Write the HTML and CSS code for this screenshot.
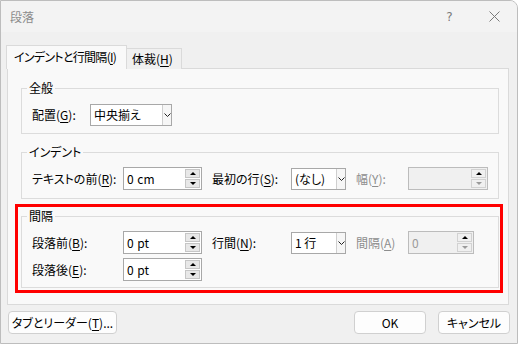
FILE: index.html
```html
<!DOCTYPE html>
<html lang="ja">
<head>
  <meta charset="UTF-8">
  <title>段落</title>
  <link rel="stylesheet" href="styles.css">
</head>
<body>
<div class="window">
  <div class="titlebar">
    <span class="title">段落</span>
    <span class="caption-btn help">?</span>
    <span class="caption-btn close">
      <svg width="11" height="11" viewBox="0 0 11 11"><path d="M0.5 0.5 L10.5 10.5 M10.5 0.5 L0.5 10.5" stroke="#7a7a7a" stroke-width="1" fill="none"/></svg>
    </span>
  </div>

  <div class="tabs">
    <div class="tab active">インデントと行間隔(<u>I</u>)</div>
    <div class="tab">体裁(<u>H</u>)</div>
  </div>

  <div class="panel">
    <!-- 全般 -->
    <fieldset class="group">
      <legend>全般</legend>
      <div class="row first">
        <span class="lbl lbl-align">配置(<u>G</u>):</span>
        <div class="select sel-align">
          <span class="val">中央揃え</span>
          <span class="drop"><svg width="7" height="4" viewBox="0 0 7 4"><polyline points="0.5,0.5 3.5,3.5 6.5,0.5" fill="none" stroke="#222" stroke-width="1"/></svg></span>
        </div>
      </div>
    </fieldset>

    <!-- インデント -->
    <fieldset class="group indent">
      <legend>インデント</legend>
      <div class="row first">
        <span class="lbl lbl-1">テキストの前(<u>R</u>):</span>
        <div class="spin">
          <span class="val">0 cm</span>
          <span class="arrows"><span class="up"></span><span class="down"></span></span>
        </div>
        <span class="lbl lbl-2">最初の行(<u>S</u>):</span>
        <div class="select sel-small">
          <span class="val">(なし)</span>
          <span class="drop"><svg width="7" height="4" viewBox="0 0 7 4"><polyline points="0.5,0.5 3.5,3.5 6.5,0.5" fill="none" stroke="#222" stroke-width="1"/></svg></span>
        </div>
        <span class="lbl lbl-3 disabled">幅(<u>Y</u>):</span>
        <div class="spin off wide">
          <span class="val"></span>
          <span class="arrows"><span class="up"></span><span class="down"></span></span>
        </div>
      </div>
    </fieldset>

    <!-- 間隔 -->
    <div class="highlight">
      <fieldset class="group spacing">
        <legend>間隔</legend>
        <div class="row first">
          <span class="lbl lbl-1">段落前(<u>B</u>):</span>
          <div class="spin">
            <span class="val">0 pt</span>
            <span class="arrows"><span class="up"></span><span class="down"></span></span>
          </div>
          <span class="lbl lbl-2">行間(<u>N</u>):</span>
          <div class="select sel-small">
            <span class="val">1 行</span>
            <span class="drop"><svg width="7" height="4" viewBox="0 0 7 4"><polyline points="0.5,0.5 3.5,3.5 6.5,0.5" fill="none" stroke="#222" stroke-width="1"/></svg></span>
          </div>
          <span class="lbl lbl-3 disabled">間隔(<u>A</u>)</span>
          <div class="spin off narrow">
            <span class="val">0</span>
            <span class="arrows"><span class="up"></span><span class="down"></span></span>
          </div>
        </div>
        <div class="row second">
          <span class="lbl lbl-1">段落後(<u>E</u>):</span>
          <div class="spin">
            <span class="val">0 pt</span>
            <span class="arrows"><span class="up"></span><span class="down"></span></span>
          </div>
        </div>
      </fieldset>
    </div>
  </div>

  <div class="footer">
    <button class="btn btn-tabs">タブとリーダー(<u>T</u>)...</button>
    <span class="spacer"></span>
    <button class="btn btn-ok">OK</button>
    <button class="btn btn-cancel">キャンセル</button>
  </div>
</div>
</body>
</html>
```

FILE: styles.css
```css
body {
  margin: 0;
  background: #ffffff;
  font-family: "Noto Sans CJK JP", sans-serif;
  font-size: 12px;
  font-feature-settings: "palt";
  color: #000;
}

u {
  text-decoration-thickness: 1px;
  text-underline-offset: 2px;
}

.window {
  width: 518px;
  height: 344px;
  box-sizing: border-box;
  border: 1px solid #bdbdbd;
  border-top-right-radius: 8px;
  background: #f0f0f0;
  overflow: hidden;
}

/* title bar */
.titlebar {
  height: 31px;
  background: #f3f3f3;
  display: flex;
  align-items: center;
}

.title {
  flex: 1;
  margin-left: 9px;
  color: #8c8c8c;
}

.caption-btn {
  width: 45px;
  height: 31px;
  display: flex;
  align-items: center;
  justify-content: center;
  color: #7a7a7a;
  font-family: "DejaVu Sans", sans-serif;
  font-size: 12px;
}

/* tabs */
.tabs {
  display: flex;
  align-items: flex-end;
  margin: 13px 0 -1px 5px;
  height: 24px;
  position: relative;
  z-index: 1;
}

.tab {
  box-sizing: border-box;
  height: 21px;
  width: 55px;
  padding-left: 5px;
  line-height: 20px;
  white-space: nowrap;
  border: 1px solid #dadada;
  border-left: none;
  border-bottom: none;
  background: #f0f0f0;
}

.tab.active {
  width: 121px;
  height: 24px;
  padding-left: 7px;
  line-height: 22px;
  letter-spacing: -0.7px;
  border-left: 1px solid #dadada;
  background: #f9f9f9;
}

/* panel */
.panel {
  margin-left: 6px;
  width: 502px;
  height: 237px;
  box-sizing: border-box;
  border: 1px solid #dadada;
  background: #f9f9f9;
  padding-top: 11px;
}

.group {
  margin: 0 9px 0 13px;
  padding: 0 10px 7px 5px;
  border: 1px solid #dcdcdc;
  min-width: 0;
}

.group legend {
  padding: 0 2px;
  line-height: 16px;
}

.indent {
  margin-top: 10px;
  padding-bottom: 8px;
}

.highlight {
  margin: 5px 5px 0 7px;
  border: 3px solid #ff0000;
  padding: 1px 1px 2px 3px;
}

.highlight .group {
  margin: 0;
  padding-bottom: 6px;
}

.row {
  display: flex;
  align-items: center;
  height: 23px;
  padding-left: 5px;
}

.row.first {
  margin-top: 7px;
}

.row.second {
  margin-top: 4px;
}

.lbl {
  flex: none;
  line-height: 16px;
  white-space: nowrap;
}

.lbl-align { width: 58px; }
.lbl-1 { width: 91px; }
.lbl-2 { width: 79px; margin-left: 10px; }
.lbl-3 { width: 52px; margin-left: 10px; }

.disabled {
  color: #8d8d8d;
}

/* select box */
.select {
  display: flex;
  box-sizing: border-box;
  height: 22px;
  border: 1px solid #a8a8a8;
  background: #ffffff;
}

.sel-align { width: 82px; }
.sel-small { width: 55px; }

.select .val {
  flex: 1;
  padding-left: 3px;
  line-height: 20px;
  white-space: nowrap;
}

.drop {
  width: 8px;
  border-left: 1px solid #cfcfcf;
  background: #f6f6f6;
  display: flex;
  align-items: center;
  justify-content: center;
}

/* spin box */
.spin {
  display: flex;
  box-sizing: border-box;
  width: 79px;
  height: 23px;
  border: 1px solid #a8a8a8;
  background: #ffffff;
  padding: 1px;
}

.spin .val {
  flex: 1;
  padding-left: 2px;
  line-height: 19px;
  word-spacing: 1px;
}

.arrows {
  display: flex;
  flex-direction: column;
  width: 15px;
  gap: 1px;
}

.up, .down {
  flex: 1;
  box-sizing: border-box;
  background: #e8e8e8;
  border: 1px solid #c6c6c6;
  display: flex;
  align-items: center;
  justify-content: center;
}

.up::after, .down::after {
  content: "";
  border-left: 3px solid transparent;
  border-right: 3px solid transparent;
}

.up::after { border-bottom: 3px solid #000; }
.down::after { border-top: 3px solid #000; }

.spin.off {
  background: #f0f0f0;
  border-color: #bcbcbc;
  color: #9a9a9a;
}

.spin.off .up, .spin.off .down {
  background: #f0f0f0;
  border-color: #d2d2d2;
}

.spin.off .down::after { border-top-color: #9a9a9a; }

.spin.wide { width: 80px; }
.spin.narrow { width: 66px; }

/* footer */
.footer {
  display: flex;
  margin: 6px 7px 0 7px;
}

.spacer { flex: 1; }

.btn {
  box-sizing: border-box;
  height: 23px;
  border: 1px solid #d0d0d0;
  border-radius: 4px;
  background: #fdfdfd;
  font-family: "Noto Sans CJK JP", sans-serif;
  font-size: 12px;
  font-feature-settings: "palt";
  color: #000;
  padding: 0;
  line-height: 20px;
}

.btn-tabs { width: 109px; }
.btn-ok { width: 72px; }
.btn-cancel { width: 72px; margin-left: 12px; }
```
